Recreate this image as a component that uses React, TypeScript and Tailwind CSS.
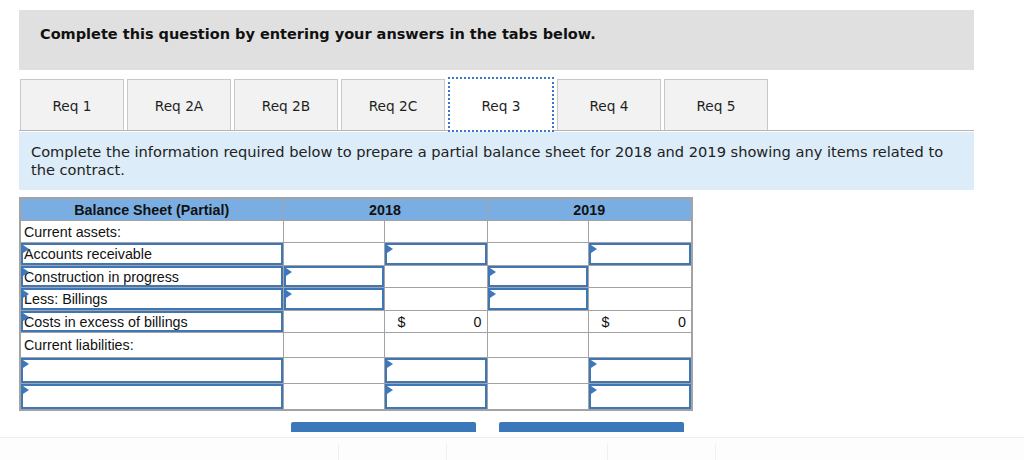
import React from "react";

const TABS = ["Req 1", "Req 2A", "Req 2B", "Req 2C", "Req 3", "Req 4", "Req 5"];

type Cell = { kind: "plain" | "input" | "total"; text?: string };

// one row: label, 2018 (col1, col2), 2019 (col1, col2)
type Row = { h: string; label: string; labelInput: boolean; cells: Cell[] };

const P: Cell = { kind: "plain" };
const I: Cell = { kind: "input" };
const T: Cell = { kind: "total" };

const ROWS: Row[] = [
  { h: "h-[21px]", label: "Current assets:", labelInput: false, cells: [P, P, P, P] },
  { h: "h-[22px]", label: "Accounts receivable", labelInput: true, cells: [P, I, P, I] },
  { h: "h-[21px]", label: "Construction in progress", labelInput: true, cells: [I, P, I, P] },
  { h: "h-[22px]", label: "Less: Billings", labelInput: true, cells: [I, P, I, P] },
  { h: "h-[21px]", label: "Costs in excess of billings", labelInput: true, cells: [T, { kind: "plain", text: "0" }, T, { kind: "plain", text: "0" }] },
  { h: "h-[24px]", label: "Current liabilities:", labelInput: false, cells: [P, P, P, P] },
  { h: "h-[25px]", label: "", labelInput: true, cells: [P, I, P, I] },
  { h: "h-[25px]", label: "", labelInput: true, cells: [P, I, P, I] },
];

function Marker() {
  return (
    <span className="absolute left-0 top-0 w-0 h-0 border-l-[6px] border-l-[#3d78bf] border-y-[4px] border-y-transparent" />
  );
}

function InputBox({ h, children }: { h: string; children?: React.ReactNode }) {
  return (
    <div className={`relative ${h} border-2 border-[#3f77b6] flex items-center pl-[1px]`}>
      <Marker />
      {children}
    </div>
  );
}

function ValueCell({ cell, h }: { cell: Cell; h: string }) {
  if (cell.kind === "input") {
    return (
      <td className="border border-[#a3a3a3] p-0">
        <InputBox h={h} />
      </td>
    );
  }
  if (cell.kind === "total") {
    return (
      <td className="border border-[#a3a3a3] border-t-black p-0">
        <div className={h} />
      </td>
    );
  }
  return (
    <td className="border border-[#a3a3a3] p-0">
      <div className={`${h} flex items-center justify-between pl-[13px] pr-[5px]`}>
        {cell.text && (
          <>
            <span>$</span>
            <span>{cell.text}</span>
          </>
        )}
      </div>
    </td>
  );
}

export default function App() {
  return (
    <div className="relative w-[1024px] h-[460px] bg-white overflow-hidden text-[#1f1f1f]">
      <div className="ml-[19px] w-[955px] pt-[10px]">
        {/* Instructions bar */}
        <div className="h-[60px] bg-[#e0e0e0] flex items-center pl-[21px] pb-[10px]">
          <span className="font-['DejaVu_Sans',sans-serif] text-[14.5px] font-bold text-[#111]">
            Complete this question by entering your answers in the tabs below.
          </span>
        </div>

        {/* Tabs */}
        <div className="mt-[9px] h-[52px] flex items-stretch gap-[3px] pl-[1px] border-b border-[#b4b4b4]">
          {TABS.map((t) =>
            t === "Req 3" ? (
              <div
                key={t}
                className="relative z-10 -mt-[2px] -mb-[2px] w-[106px] bg-white border-2 border-dotted border-[#3a78c4] flex items-center justify-center pt-[4px] font-['DejaVu_Sans',sans-serif] text-[13.7px]"
              >
                {t}
              </div>
            ) : (
              <div
                key={t}
                className="w-[104px] bg-[#f2f2f2] border border-b-0 border-[#c8c8c8] flex items-center justify-center pt-[2px] font-['DejaVu_Sans',sans-serif] text-[13.7px]"
              >
                {t}
              </div>
            )
          )}
        </div>

        {/* Info */}
        <div className="mt-[1px] h-[58px] bg-[#dcecf8] pl-[12px] pr-[24px] pt-[11px] font-['DejaVu_Sans',sans-serif] text-[14.6px] leading-[18px] text-[#222]">
          Complete the information required below to prepare a partial balance sheet for 2018 and 2019 showing any items related to the contract.
        </div>

        {/* Balance sheet table */}
        <table className="mt-[7px] border-collapse border-2 border-[#a3a3a3] font-['Liberation_Sans',Arial,sans-serif] text-[14.3px] leading-[16px] text-[#111]">
          <colgroup>
            <col className="w-[263px]" />
            <col className="w-[101px]" />
            <col className="w-[103px]" />
            <col className="w-[101px]" />
            <col className="w-[104px]" />
          </colgroup>
          <thead>
            <tr className="bg-[#7aaee2]">
              <th className="border border-[#a3a3a3] font-bold p-0">
                <div className="h-[21px] flex items-center justify-center">Balance Sheet (Partial)</div>
              </th>
              <th colSpan={2} className="border border-[#a3a3a3] font-bold p-0">2018</th>
              <th colSpan={2} className="border border-[#a3a3a3] font-bold p-0">2019</th>
            </tr>
          </thead>
          <tbody>
            {ROWS.map((r, i) => (
              <tr key={i}>
                {r.labelInput ? (
                  <td className="border border-[#a3a3a3] p-0">
                    <InputBox h={r.h}>{r.label}</InputBox>
                  </td>
                ) : (
                  <td className="border border-[#a3a3a3] p-0">
                    <div className={`${r.h} flex items-center pl-[3px]`}>{r.label}</div>
                  </td>
                )}
                {r.cells.map((c, j) => (
                  <ValueCell key={j} cell={c} h={r.h} />
                ))}
              </tr>
            ))}
          </tbody>
        </table>
      </div>

      {/* Nav buttons (scrolled under footer) */}
      <div className="mt-[11px] ml-[291px] flex gap-[23px]">
        <div className="w-[185px] h-[12px] bg-[#3b78b9] rounded-t-[2px]" />
        <div className="w-[185px] h-[12px] bg-[#3b78b9] rounded-t-[2px]" />
      </div>

      {/* Fixed footer */}
      <div className="absolute left-0 right-0 top-[432px] h-[5px] bg-white" />
      <div className="absolute left-0 right-0 top-[437px] bottom-0 bg-[#fdfdfd] border-t border-[#f0f0f0]">
        <div className="absolute top-[6px] bottom-0 left-[338px] w-px bg-[#f0f0f0]" />
        <div className="absolute top-[6px] bottom-0 left-[446px] w-px bg-[#f0f0f0]" />
        <div className="absolute top-[6px] bottom-0 left-[607px] w-px bg-[#f0f0f0]" />
        <div className="absolute top-[6px] bottom-0 left-[715px] w-px bg-[#f0f0f0]" />
      </div>
    </div>
  );
}
